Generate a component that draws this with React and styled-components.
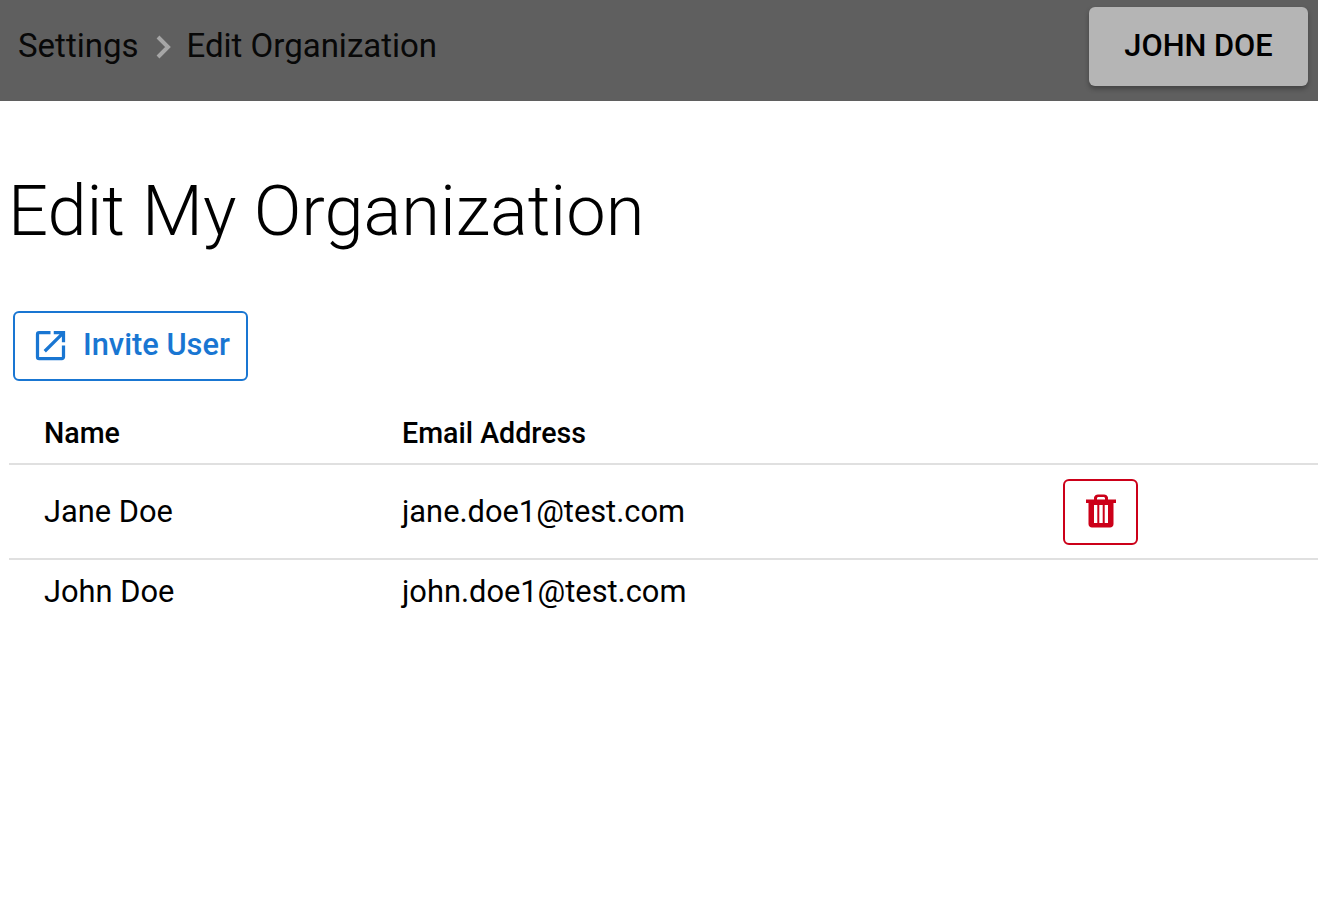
import React from "react";
import styled, { createGlobalStyle } from "styled-components";
import { MdOpenInNew } from "react-icons/md";

const Global = createGlobalStyle`
  html, body { margin: 0; padding: 0; background: #fff; }
  body { font-family: Roboto, "Liberation Sans", sans-serif; color: #000; }
`;

const Header = styled.header`
  height: 101px;
  background: #5f5f5f;
  display: flex;
  align-items: center;
  justify-content: space-between;
  padding: 0 10px 0 18px;
  box-sizing: border-box;
`;

const Crumbs = styled.nav`
  display: flex;
  align-items: center;
  font-size: 33px;
  color: #080808;
  margin-top: -10px;
`;

const Chevron = styled.svg`
  width: 18px;
  height: 26px;
  margin: 2px 15px 0 15px;
`;

const UserButton = styled.button`
  width: 219px;
  height: 79px;
  margin-top: -8px;
  padding: 0 0 3px;
  border: 0;
  border-radius: 6px;
  background: #b5b5b5;
  font: 500 30.8px Roboto, sans-serif;
  color: #000;
  box-shadow: 0 3px 5px rgba(0, 0, 0, 0.3);
`;

const Main = styled.main`
  padding: 0 0 0 9px;
`;

const Title = styled.h1`
  margin: 0 0 0 -1px;
  padding-top: 68px;
  font-size: 70.4px;
  line-height: 85px;
  font-weight: 300;
`;

const InviteButton = styled.button`
  display: flex;
  align-items: center;
  box-sizing: border-box;
  width: 235px;
  height: 70px;
  margin: 57px 0 0 4px;
  padding: 0 0 4px 16px;
  background: #fff;
  border: 2px solid #1976d2;
  border-radius: 6px;
  color: #1976d2;
  font: 500 30.8px Roboto, sans-serif;
  svg { font-size: 39px; margin-right: 13px; margin-top: 2px; }
`;

const Row = styled.div`
  display: grid;
  grid-template-columns: 358px 661px 1fr;
  align-items: center;
  box-sizing: border-box;
  height: ${(p) => p.$height}px;
  padding-left: 35px;
  padding-top: ${(p) => p.$top || 0}px;
  font-size: ${(p) => (p.$head ? 28.6 : 30.8)}px;
  font-weight: ${(p) => (p.$head ? 500 : 400)};
  border-bottom: ${(p) => (p.$last ? "0" : "2px solid #e0e0e0")};
`;

const DeleteButton = styled.button`
  width: 75px;
  height: 66px;
  background: #fff;
  border: 2px solid #cc0019;
  border-radius: 6px;
  color: #cc0019;
  display: flex;
  align-items: center;
  justify-content: center;
  padding: 0 0 2px;
`;

const TrashIcon = () => (
  <svg width="32" height="34" viewBox="0 0 32 34">
    <path
      fill="currentColor"
      fillRule="evenodd"
      d="M9 3.500C9.500 1.500 11 0.500 13 0.500h6c2 0 3.500 1 4 3V5.500h8V9h-2.500v21c0 2-1.500 3.500-3.500 3.500H7C5 33.500 3.500 32 3.500 30V9H1V5.500h8V3.500zM12 5.500h8V4.500c0-1-.7-1.500-1.500-1.500h-5c-.8 0-1.500.5-1.500 1.500V5.500zM9 11v18h3.300V11H9zm5.300 0v18h3.400V11h-3.400zM19.700 11v18H23V11h-3.300z"
    />
  </svg>
);

export default function App() {
  return (
    <>
      <Global />
      <Header>
        <Crumbs>
          Settings
          <Chevron viewBox="0 0 18 26">
            <path d="M4 3l10 10L4 23" fill="none" stroke="#a6a6a6" strokeWidth="4" />
          </Chevron>
          Edit Organization
        </Crumbs>
        <UserButton>JOHN DOE</UserButton>
      </Header>
      <Main>
        <Title>Edit My Organization</Title>
        <InviteButton>
          <MdOpenInNew />
          Invite User
        </InviteButton>
        <Row $head $height={84} $top={22}>
          <span>Name</span>
          <span>Email Address</span>
        </Row>
        <Row $height={95}>
          <span>Jane Doe</span>
          <span>jane.doe1@test.com</span>
          <DeleteButton aria-label="Delete">
            <TrashIcon />
          </DeleteButton>
        </Row>
        <Row $last $height={62}>
          <span>John Doe</span>
          <span>john.doe1@test.com</span>
        </Row>
      </Main>
    </>
  );
}
